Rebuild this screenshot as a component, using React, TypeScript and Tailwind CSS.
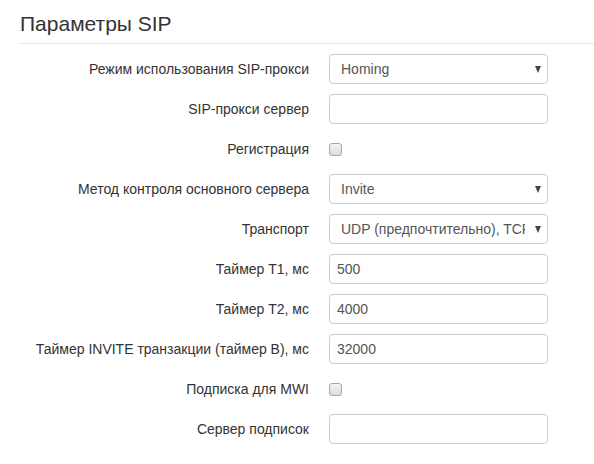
import React from "react";

type Row =
  | { label: string; kind: "select"; value: string }
  | { label: string; kind: "input"; value: string }
  | { label: string; kind: "checkbox" };

const ROWS: Row[] = [
  { label: "Режим использования SIP-прокси", kind: "select", value: "Homing" },
  { label: "SIP-прокси сервер", kind: "input", value: "" },
  { label: "Регистрация", kind: "checkbox" },
  { label: "Метод контроля основного сервера", kind: "select", value: "Invite" },
  { label: "Транспорт", kind: "select", value: "UDP (предпочтительно), TCP" },
  { label: "Таймер T1, мс", kind: "input", value: "500" },
  { label: "Таймер T2, мс", kind: "input", value: "4000" },
  { label: "Таймер INVITE транзакции (таймер B), мс", kind: "input", value: "32000" },
  { label: "Подписка для MWI", kind: "checkbox" },
  { label: "Сервер подписок", kind: "input", value: "" },
];

function Field({ row }: { row: Row }) {
  if (row.kind === "checkbox") {
    return (
      <div className="w-[13px] h-[13px] rounded-[3px] border border-[#a6a6a6] bg-gradient-to-b from-[#f4f4f4] to-[#dcdcdc]" />
    );
  }
  if (row.kind === "select") {
    return (
      <div className="relative w-[219px] h-[30px] rounded-[4px] border border-[#ccc] bg-white flex items-center pl-[11px] pr-[22px] overflow-hidden">
        <span className="whitespace-nowrap overflow-hidden text-[#555]">{row.value}</span>
        <span className="absolute right-[6px] top-[11px] w-0 h-0 border-l-[3.5px] border-r-[3.5px] border-t-[7px] border-l-transparent border-r-transparent border-t-[#444]" />
      </div>
    );
  }
  return (
    <div className="w-[219px] h-[30px] rounded-[4px] border border-[#ccc] bg-white flex items-center pl-[7px] text-[#555]">
      {row.value}
    </div>
  );
}

export default function App() {
  return (
    <div className="w-[594px] h-[464px] bg-white text-[#333] font-['Liberation_Sans',Arial,sans-serif] text-[14px] overflow-hidden">
      <div className="pl-[19px] pt-[10px]">
        <h3 className="text-[21px] leading-[28px] pl-px pb-[5px] border-b border-[#e5e5e5]">Параметры SIP</h3>
      </div>
      <div className="pt-[10px] flex flex-col gap-[10px]">
        {ROWS.map((r, i) => (
          <div key={i} className="flex items-center h-[30px]">
            <div className="w-[309px] text-right whitespace-nowrap">{r.label}</div>
            <div className="ml-[20px] flex items-center">
              <Field row={r} />
            </div>
          </div>
        ))}
      </div>
    </div>
  );
}
